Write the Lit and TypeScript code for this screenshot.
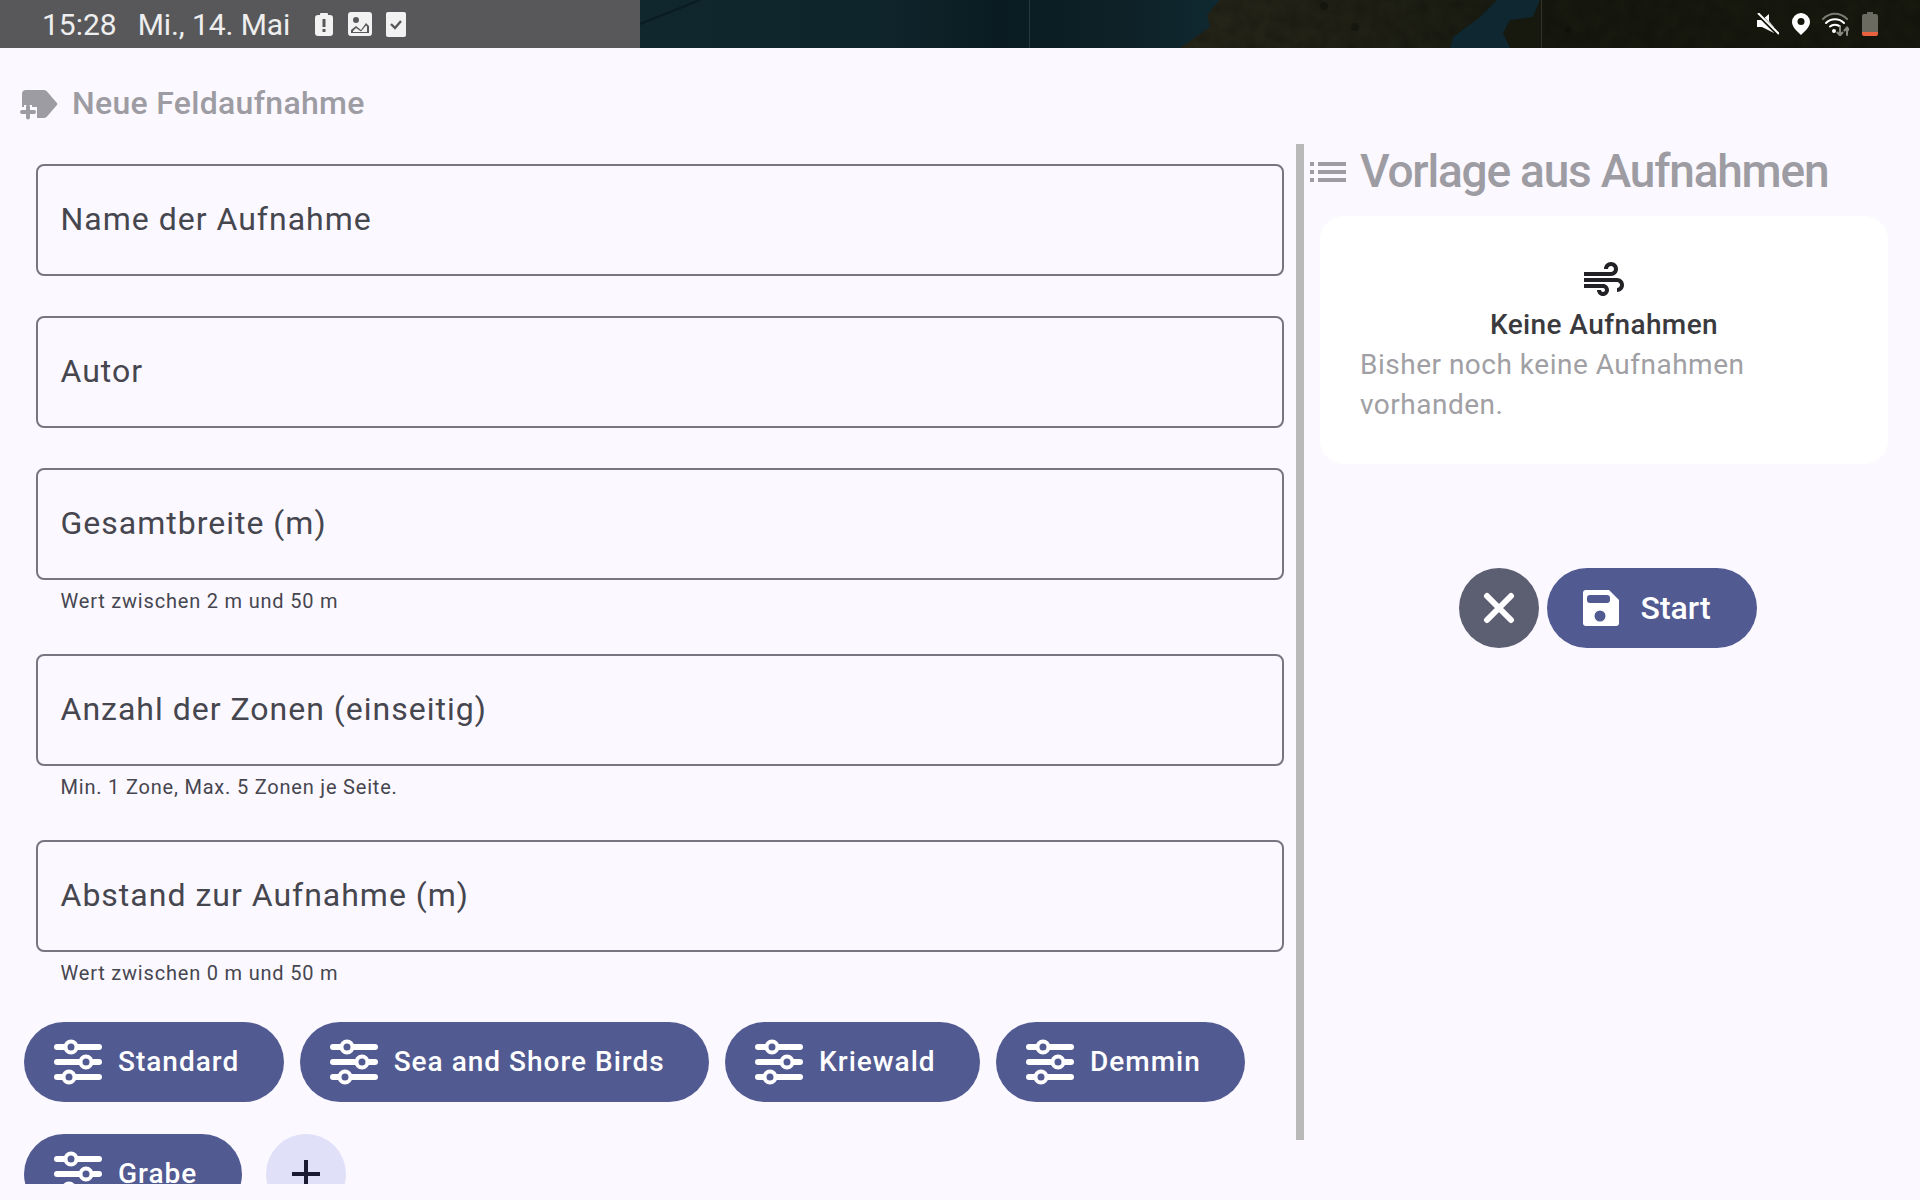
import { LitElement, html, css } from "lit";
import { customElement } from "lit/decorators.js";

const tune = html`<svg class="tune" viewBox="0 0 48 48" width="48" height="48">
  <g fill="none" stroke="#fff" stroke-width="6" stroke-linecap="round">
    <path d="M3 9H45M3 24H45M3 39H45" />
  </g>
  <g fill="#525a92" stroke="#fff" stroke-width="4">
    <circle cx="17" cy="9" r="5.5" />
    <circle cx="32" cy="24" r="5.5" />
    <circle cx="15" cy="39" r="5.5" />
  </g>
</svg>`;

const fields: { label: string; help?: string }[] = [
  { label: "Name der Aufnahme" },
  { label: "Autor" },
  { label: "Gesamtbreite (m)", help: "Wert zwischen 2 m und 50 m" },
  { label: "Anzahl der Zonen (einseitig)", help: "Min. 1 Zone, Max. 5 Zonen je Seite." },
  { label: "Abstand zur Aufnahme (m)", help: "Wert zwischen 0 m und 50 m" },
];

const chips = ["Standard", "Sea and Shore Birds", "Kriewald", "Demmin", "Grabe"];

@customElement("app-root")
export class AppRoot extends LitElement {
  static styles = css`
    :host {
      display: block;
      width: 1920px;
      height: 1200px;
      overflow: hidden;
      background: #fbf8ff;
      font-family: Roboto, "Noto Sans", sans-serif;
      color: #46464f;
    }
    svg { display: block; flex: none; }
    .status {
      position: relative;
      height: 48px;
      display: flex;
      align-items: center;
      justify-content: space-between;
      background: #14150b;
      overflow: hidden;
    }
    .wallpaper { position: absolute; inset: 0; }
    .status-left {
      position: relative;
      width: 640px;
      height: 48px;
      box-sizing: border-box;
      padding-left: 42px;
      background: #58585b;
      color: #eeeeee;
      font-size: 30px;
      display: flex;
      align-items: center;
    }
    .date { margin-left: 21px; letter-spacing: -0.1px; }
    .si1 { margin-left: 25px; }
    .si2 { margin-left: 15px; }
    .si3 { margin-left: 14px; }
    .status-right {
      position: relative;
      display: flex;
      align-items: center;
      padding-right: 42px;
    }
    .sr2 { margin-left: 13px; }
    .sr3 { margin-left: 12px; }
    .sr4 { margin-left: 13px; }

    .header {
      height: 96px;
      display: flex;
      align-items: center;
      padding: 14px 0 0 20px;
      gap: 14px;
      box-sizing: border-box;
    }
    .header svg { margin-top: 2px; }
    .title {
      font-size: 32px;
      font-weight: 500;
      letter-spacing: 0.3px;
      color: #9d9ca3;
      line-height: 40px;
    }
    .body {
      height: 1040px;
      overflow: hidden;
      display: flex;
      align-items: flex-start;
    }
    .left {
      width: 1296px;
      flex: none;
      padding-top: 20px;
      box-sizing: border-box;
    }
    .form {
      display: flex;
      flex-direction: column;
      gap: 40px;
      padding: 0 12px 0 36px;
    }
    .box {
      height: 112px;
      box-sizing: border-box;
      border: 2px solid #777680;
      border-radius: 8px;
      display: flex;
      align-items: center;
      padding: 0 0 2px 22.5px;
      font-size: 32px;
      letter-spacing: 1px;
    }
    .help {
      font-size: 20px;
      letter-spacing: 0.8px;
      line-height: 27px;
      padding: 8px 0 0 24.5px;
      margin-bottom: -1px;
    }
    .chips {
      display: flex;
      flex-wrap: wrap;
      gap: 32px 16px;
      padding: 36px 0 0 24px;
    }
    .chip {
      height: 80px;
      border-radius: 40px;
      background: #525a92;
      color: #fff;
      display: flex;
      align-items: center;
      gap: 16px;
      padding: 0 44.4px 0 30px;
      font-size: 28px;
      font-weight: 500;
      letter-spacing: 1px;
    }
    .chip span { padding-bottom: 2px; }
    .add {
      width: 80px;
      height: 80px;
      margin-left: 8px;
      border-radius: 40px;
      background: #e0e0f9;
      display: flex;
      align-items: center;
      justify-content: center;
    }
    .divider {
      width: 8px;
      height: 996px;
      background: #b9b9b9;
      flex: none;
    }
    .right {
      flex: 1;
      padding: 0 32px 0 16px;
      box-sizing: border-box;
    }
    .r-head {
      height: 56px;
      display: flex;
      align-items: center;
      margin-left: -17px;
      gap: 8px;
      color: #9d9ca3;
      white-space: nowrap;
    }
    .r-head svg { margin: 0 0 0 1px; }
    .r-head span {
      font-size: 46px;
      font-weight: 500;
      letter-spacing: -1.2px;
      padding-bottom: 3px;
    }
    .card {
      margin-top: 16px;
      height: 248px;
      box-sizing: border-box;
      padding: 40px;
      background: #fff;
      border-radius: 24px;
    }
    .wind { margin: 0 auto; }
    .card-title {
      text-align: center;
      font-size: 28px;
      font-weight: 500;
      letter-spacing: 0.4px;
      color: #3a3a3e;
      line-height: 40px;
      padding-top: 1px;
      margin-bottom: -1px;
    }
    .card-text {
      font-size: 28px;
      line-height: 40px;
      letter-spacing: 0.5px;
      color: #a0a0a4;
      padding-top: 1px;
    }
    .actions {
      display: flex;
      justify-content: center;
      gap: 8px;
      margin: 104px 0 0 7px;
    }
    .close {
      width: 80px;
      height: 80px;
      border-radius: 50%;
      background: #5c5e72;
      display: flex;
      align-items: center;
      justify-content: center;
    }
    .start {
      height: 80px;
      width: 210px;
      box-sizing: border-box;
      border-radius: 40px;
      background: #525a92;
      color: #fff;
      display: flex;
      align-items: center;
      gap: 22px;
      padding-left: 36px;
      font-size: 32px;
      font-weight: 500;
    }
  `;

  render() {
    return html`
      <div class="status">
        <svg class="wallpaper" viewBox="0 0 1920 48" width="1920" height="48">
          <defs>
            <linearGradient id="sea" x1="640" x2="1240" y1="0" y2="0" gradientUnits="userSpaceOnUse">
              <stop offset="0" stop-color="#10272e" />
              <stop offset="0.4" stop-color="#0f252c" />
              <stop offset="0.6" stop-color="#0a1c21" />
              <stop offset="0.8" stop-color="#0d2127" />
              <stop offset="1" stop-color="#102a33" />
            </linearGradient>
            <linearGradient id="land" x1="1180" x2="1560" y1="0" y2="0" gradientUnits="userSpaceOnUse">
              <stop offset="0" stop-color="#26261a" />
              <stop offset="0.4" stop-color="#212116" />
              <stop offset="1" stop-color="#191b10" />
            </linearGradient>
            <filter id="grain" x="0" y="0" width="100%" height="100%">
              <feTurbulence type="fractalNoise" baseFrequency="0.07" numOctaves="2" seed="4" />
              <feColorMatrix values="0 0 0 0 0  0 0 0 0 0  0 0 0 0 0  0 0 0 -2 1.400" />
              <feComposite in2="SourceGraphic" operator="in" />
            </filter>
          </defs>
          <rect width="1920" height="48" fill="#17180e" />
          <rect x="640" width="620" height="48" fill="url(#sea)" />
          <path d="M1220 0L1207 15L1210 27L1180 48H1450L1453 37L1480 17L1497 0Z" fill="url(#land)" />
          <path d="M1497 0L1480 17L1453 37L1450 48H1510L1503 33L1510 20L1533 17L1540 0Z" fill="#0f2730" />
          <path d="M1220 0L1207 15L1210 27L1180 48H1450L1453 37L1480 17L1497 0Z" fill="#000" opacity="0.18" filter="url(#grain)" />
          <rect x="1541" width="379" height="48" fill="#000" opacity="0.15" filter="url(#grain)" />
          <g fill="#0c0e07" opacity="0.45">
            <circle cx="1324" cy="6" r="4" />
            <circle cx="1355" cy="27" r="4" />
            <circle cx="1568" cy="30" r="3" />
          </g>
          <path d="M640 24L700 0" stroke="#07161a" stroke-width="2" opacity="0.6" />
          <path d="M1029.500 0V48M1541.500 0V48" stroke="#ffffff" stroke-opacity="0.12" stroke-width="1" />
        </svg>
        <div class="status-left">
          <span>15:28</span><span class="date">Mi., 14. Mai</span>
          <svg class="si1" width="18" height="24" viewBox="0 0 18 24">
            <path d="M5 3V2a1 1 0 0 1 1-1h6a1 1 0 0 1 1 1v1h2a3 3 0 0 1 3 3v15a3 3 0 0 1-3 3H3a3 3 0 0 1-3-3V6a3 3 0 0 1 3-3Z" fill="#f2f2f2" />
            <path d="M7.500 7h3v8h-3zM7.500 17h3v3h-3z" fill="#58585b" />
          </svg>
          <svg class="si2" width="24" height="24" viewBox="0 0 24 24">
            <rect width="24" height="24" rx="3" fill="#f2f2f2" />
            <circle cx="8" cy="8" r="3" fill="#58585b" />
            <path d="M3 21v-3l5-4 5 4 5-7 3 3v7Z" fill="#58585b" />
            <path d="M5 20v-1l3-3 5 3.500 5-6 1 1v5.500Z" fill="#f2f2f2" />
          </svg>
          <svg class="si3" width="20" height="25" viewBox="0 0 20 25">
            <rect width="20" height="25" rx="2" fill="#f2f2f2" />
            <path d="M5 12l4 4 6-7" fill="none" stroke="#58585b" stroke-width="2.400" />
          </svg>
        </div>
        <div class="status-right">
          <svg width="22" height="22" viewBox="0 0 22 22">
            <path d="M0 7h5l7-6v7L17 14v6L5 14H0Z" fill="#fff" />
            <path d="M2 2L21 21" stroke="#14150b" stroke-width="4" />
            <path d="M1 0L22 21" stroke="#fff" stroke-width="2" />
          </svg>
          <svg class="sr2" width="18" height="22" viewBox="0 0 18 22">
            <path d="M9 0a9 9 0 0 1 9 9c0 5-5 9-9 13C5 18 0 14 0 9a9 9 0 0 1 9-9Z" fill="#fff" />
            <circle cx="9" cy="8.500" r="3.500" fill="#14150b" />
          </svg>
          <svg class="sr3" width="27" height="24" viewBox="0 0 27 24">
            <g fill="none" stroke-width="2" stroke-linecap="round">
              <path d="M1 7C8 0 18 0 25 7" stroke="#7c7c74" />
              <path d="M4 11C9 6 17 6 22 11" stroke="#fff" />
              <path d="M8 14.500C10.500 12 15.500 12 18 14.500" stroke="#fff" />
              <path d="M25 23V16M22.500 18.500l2.500-3 2.500 3" stroke="#8a8a80" />
              <path d="M18 15V23M15.500 20.500l2.500 3 2.500-3" stroke="#8a8a80" />
            </g>
            <circle cx="12" cy="19" r="2" fill="#fff" />
          </svg>
          <svg class="sr4" width="16" height="24" viewBox="0 0 16 24">
            <path d="M5 0h6v2h3a2 2 0 0 1 2 2v16H0V4a2 2 0 0 1 2-2h3Z" fill="#6a6a60" />
            <path d="M0 20h16v2a2 2 0 0 1-2 2H2a2 2 0 0 1-2-2Z" fill="#e8623f" />
          </svg>
        </div>
      </div>

      <div class="header">
        <svg width="38" height="32" viewBox="0 0 38 32">
          <path d="M6 2H24a4 4 0 0 1 3 1.500L36.500 14.500a2 2 0 0 1 0 3L27 28.500a4 4 0 0 1-3 1.500H17V19H2V6a4 4 0 0 1 4-4Z" fill="#9d9ca3" />
          <path d="M8 17V32M0 24H16" stroke="#fbf8ff" stroke-width="8" />
          <path d="M8 18.500V29.500M2 24H14" stroke="#9d9ca3" stroke-width="4" stroke-linecap="round" />
        </svg>
        <span class="title">Neue Feldaufnahme</span>
      </div>

      <div class="body">
        <div class="left">
          <div class="form">
            ${fields.map(
              (f) => html`<div>
                <div class="box">${f.label}</div>
                ${f.help ? html`<div class="help">${f.help}</div>` : ""}
              </div>`
            )}
          </div>
          <div class="chips">
            ${chips.map((c) => html`<div class="chip">${tune}<span>${c}</span></div>`)}
            <div class="add">
              <svg width="30" height="30" viewBox="0 0 30 30">
                <path d="M15 1V29M1 15H29" stroke="#1a1b33" stroke-width="4" />
              </svg>
            </div>
          </div>
        </div>
        <div class="divider"></div>
        <div class="right">
          <div class="r-head">
            <svg width="48" height="48" viewBox="0 0 24 24" fill="#9d9ca3">
              <path d="M3 13h2v-2H3v2zm0 4h2v-2H3v2zm0-8h2V7H3v2zm4 4h14v-2H7v2zm0 4h14v-2H7v2zM7 7v2h14V7H7z" />
            </svg>
            <span>Vorlage aus Aufnahmen</span>
          </div>
          <div class="card">
            <svg class="wind" width="48" height="48" viewBox="0 0 24 24" fill="#222226">
              <path d="M14.500,17c0,1.650-1.350,3-3,3s-3-1.350-3-3h2c0,0.550,0.450,1,1,1s1-0.450,1-1s-0.450-1-1-1H2v-2h9.500C13.150,14,14.500,15.350,14.500,17z M19,6.500C19,4.570,17.430,3,15.500,3S12,4.570,12,6.500h2C14,5.670,14.670,5,15.500,5S17,5.670,17,6.500S16.330,8,15.500,8H2v2h13.500C17.430,10,19,8.430,19,6.500z M18.500,11H2v2h16.500c0.830,0,1.500,0.670,1.500,1.500S19.330,16,18.500,16v2c1.930,0,3.500-1.570,3.500-3.500S20.430,11,18.500,11z" />
            </svg>
            <div class="card-title">Keine Aufnahmen</div>
            <div class="card-text">Bisher noch keine Aufnahmen vorhanden.</div>
          </div>
          <div class="actions">
            <div class="close">
              <svg width="32" height="32" viewBox="0 0 32 32">
                <path d="M4 4L28 28M28 4L4 28" stroke="#fff" stroke-width="6" stroke-linecap="round" />
              </svg>
            </div>
            <div class="start">
              <svg width="36" height="36" viewBox="0 0 36 36">
                <path d="M3 0H26L36 10V33a3 3 0 0 1-3 3H3a3 3 0 0 1-3-3V3a3 3 0 0 1 3-3Z" fill="#fff" />
                <rect x="4" y="5" width="23" height="8" rx="3" fill="#525a92" />
                <circle cx="17" cy="26" r="5.500" fill="#525a92" />
              </svg>
              <span>Start</span>
            </div>
          </div>
        </div>
      </div>
    `;
  }
}
